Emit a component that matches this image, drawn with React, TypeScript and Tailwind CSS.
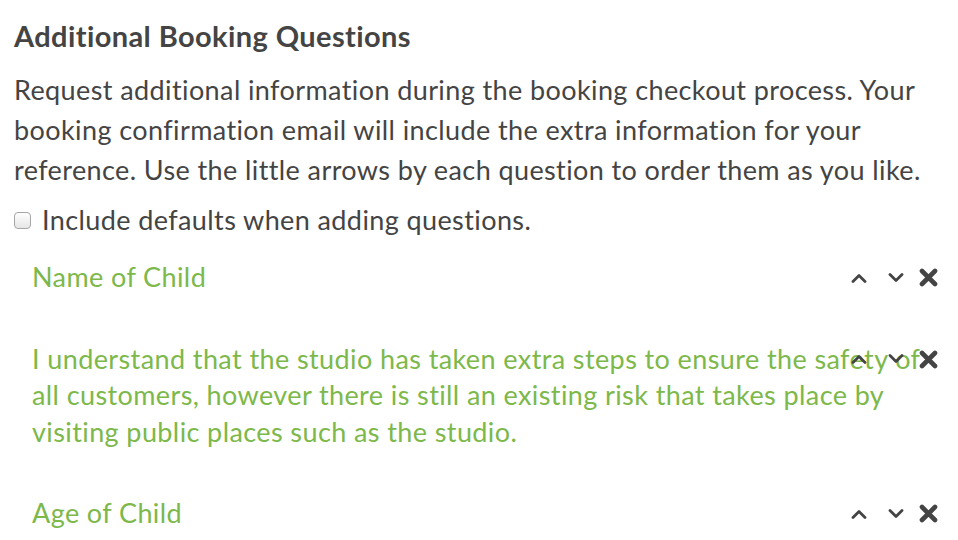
import { useState } from 'react'

const questions = [
  'Name of Child',
  'I understand that the studio has taken extra steps to ensure the safety of all customers, however there is still an existing risk that takes place by visiting public places such as the studio.',
  'Age of Child',
]

function Chevron({ up }: { up?: boolean }) {
  return (
    <svg width="16" height="10" viewBox="0 0 16 10" className="block">
      <path
        d={up ? 'M2 8.5 L8 2.5 L14 8.5' : 'M2 1.5 L8 7.5 L14 1.5'}
        fill="none"
        stroke="#444"
        strokeWidth="2.8"
        strokeLinecap="round"
        strokeLinejoin="round"
      />
    </svg>
  )
}

function Cross() {
  return (
    <svg width="19" height="19" viewBox="0 0 19 19" className="block">
      <path d="M3 3 L16 16 M16 3 L3 16" stroke="#444" strokeWidth="4.6" strokeLinecap="round" />
    </svg>
  )
}

export default function App() {
  const [defaults, setDefaults] = useState(false)

  return (
    <main className="min-h-screen bg-white text-[#444] font-['Lato',sans-serif] pl-[14px] pr-[28px] pt-[18px]">
      <h2 className="text-[29px] font-bold leading-[36px] tracking-[0.4px] text-[#444]">Additional Booking Questions</h2>
      <p className="mt-[16px] text-[27px] leading-[40px] tracking-[0.4px]">
        Request additional information during the booking checkout process. Your booking confirmation email will
        include the extra information for your reference. Use the little arrows by each question to order them as you
        like.
      </p>
      <label className="mt-[14px] flex items-center gap-[11px] text-[27px] leading-[32px] tracking-[0.4px]">
        <input
          type="checkbox"
          checked={defaults}
          onChange={() => setDefaults(!defaults)}
          className="w-[17px] h-[17px] shrink-0 rounded-[4px] appearance-none border border-[#a6a6a6] bg-gradient-to-b from-white to-[#e6e6e6]"
        />
        Include defaults when adding questions.
      </label>

      <div className="mt-[23px] flex flex-col gap-[45px] pl-[18px] -mr-[24px]">
        {questions.map((q) => (
          <div key={q} className="relative pr-[26px]">
            <p className="text-[27px] leading-[36.5px] tracking-[0.4px] text-[#7db84a]">{q}</p>
            <div className="absolute right-[16px] top-[9px] flex items-center">
              <Chevron up />
              <span className="ml-[21px]">
                <Chevron />
              </span>
              <span className="ml-[15px]">
                <Cross />
              </span>
            </div>
          </div>
        ))}
      </div>
    </main>
  )
}
